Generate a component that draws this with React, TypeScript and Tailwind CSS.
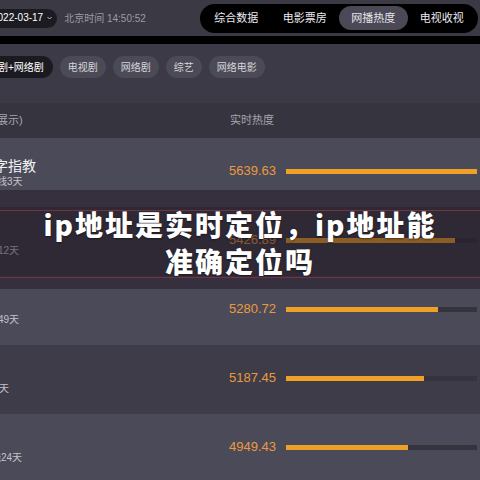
import React from 'react'

const rows = [
  { title: '字指教', titleMl: '-ml-[6px]', sub: '线3天', subMl: '-ml-[3px]', value: '5639.63', pct: 100, light: true },
  { title: '', titleMl: '', sub: '12天', subMl: '-ml-[2px]', value: '5426.89', pct: 88.5, light: false },
  { title: '', titleMl: '', sub: '49天', subMl: '-ml-[2px]', value: '5280.72', pct: 79.6, light: true },
  { title: '', titleMl: '', sub: '天', subMl: '-ml-[1px]', value: '5187.45', pct: 72.3, light: false },
  { title: '', titleMl: '', sub: '线24天', subMl: '-ml-[9px]', value: '4949.43', pct: 63.9, light: true },
]

const tabs = ['综合数据', '电影票房', '网播热度', '电视收视']
const chips = ['电视剧', '网络剧', '综艺', '网络电影']

export default function App() {
  return (
    <div
      className="relative w-[480px] h-[480px] overflow-hidden bg-[#3b3a46] text-white"
      style={{ fontFamily: '"Liberation Sans", "Noto Sans CJK SC", sans-serif' }}
    >
      {/* Top bar */}
      <div className="flex items-center h-[36px] bg-[#3a3944]">
        <div className="-ml-[20px] flex items-center h-[19px] rounded-full bg-[#1c1b21] pl-[12px] pr-[5px] gap-[4px]">
          <span className="text-[10px] leading-none text-white">2022-03-17</span>
          <svg width="5" height="4" viewBox="0 0 5 4" fill="none">
            <path d="M0.5 1 L2.5 3 L4.5 1" stroke="#cfcfd6" strokeWidth="0.9" />
          </svg>
        </div>
        <span className="ml-[7px] text-[10px] text-[#9d9ca6]">北京时间 14:50:52</span>
        <div className="ml-auto mr-[2px] flex items-center h-[29px] rounded-full bg-black px-[2px]">
          {tabs.map((t) => (
            <div
              key={t}
              className={
                t === '网播热度'
                  ? 'flex items-center justify-center w-[68.5px] h-[24px] rounded-full bg-[#4a4955] text-[11px] text-[#e6e5ea]'
                  : 'flex items-center justify-center w-[68.5px] h-[24px] rounded-full text-[11px] text-[#ecebf0]'
              }
            >
              {t}
            </div>
          ))}
        </div>
      </div>

      {/* Divider strip */}
      <div className="h-[8px] bg-black" />

      {/* Filter chips */}
      <div className="flex items-start gap-[7px] h-[59px] pt-[12px] bg-[#3b3a46]">
        <div className="-ml-[31px] flex items-center h-[22px] rounded-full bg-[#1b1a20] px-[9px] text-[10px] text-white">
          电视剧+网络剧
        </div>
        {chips.map((c) => (
          <div
            key={c}
            className="flex items-center h-[22px] rounded-full bg-[#4b4a56] px-[8px] text-[10px] text-[#d6d5dc]"
          >
            {c}
          </div>
        ))}
      </div>

      {/* Table header */}
      <div className="flex items-center h-[35px] bg-[#36353f] text-[11px] text-[#a6a5ae]">
        <div className="w-[230px]">
          <span className="-ml-[3px] block">展示)</span>
        </div>
        <div>实时热度</div>
      </div>

      {/* Rows */}
      {rows.map((r, i) => (
        <div
          key={i}
          className={r.light ? 'flex h-[69px] bg-[#4b4a59]' : 'flex h-[69px] bg-[#3d3c48]'}
        >
          <div className="w-[229px] pt-[19px] flex flex-col">
            <div className="h-[18px] leading-[18px] text-[14px] text-[#f2f1f5] whitespace-nowrap">
              <span className={`block ${r.titleMl}`}>{r.title}</span>
            </div>
            <div className="leading-[14px] text-[10px] text-[#c4c3cb] whitespace-nowrap">
              <span className={`block ${r.subMl}`}>{r.sub}</span>
            </div>
          </div>
          <div className="flex-1 flex items-center pb-[3px] pr-[3px]">
            <div className="w-[57px] text-[13px] text-[#ea9a3e]">{r.value}</div>
            <div className="flex-1 h-[5px] bg-[#34333e]">
              <div className="h-full bg-[#efa027]" style={{ width: `${r.pct}%` }} />
            </div>
          </div>
        </div>
      ))}

      {/* Title overlay */}
      <div className="absolute left-0 right-0 top-[190px] h-[99px] bg-[rgba(32,20,34,0.48)]">
        <div className="absolute left-0 right-0 top-[20px] h-[1px] bg-[#73343f]" />
        <div className="absolute left-0 right-0 top-[87px] h-[1px] bg-[#73343f]" />
        <div className="relative flex h-full items-center justify-center pt-[6px]">
          <div
            className="text-center text-[28px] leading-[37px] font-black tracking-[2px] text-white [text-shadow:0_1px_2px_rgba(0,0,0,0.45)]"
            style={{ fontFamily: '"Noto Sans CJK SC", sans-serif' }}
          >
            ip地址是实时定位，ip地址能
            <br />
            准确定位吗
          </div>
        </div>
      </div>
    </div>
  )
}
